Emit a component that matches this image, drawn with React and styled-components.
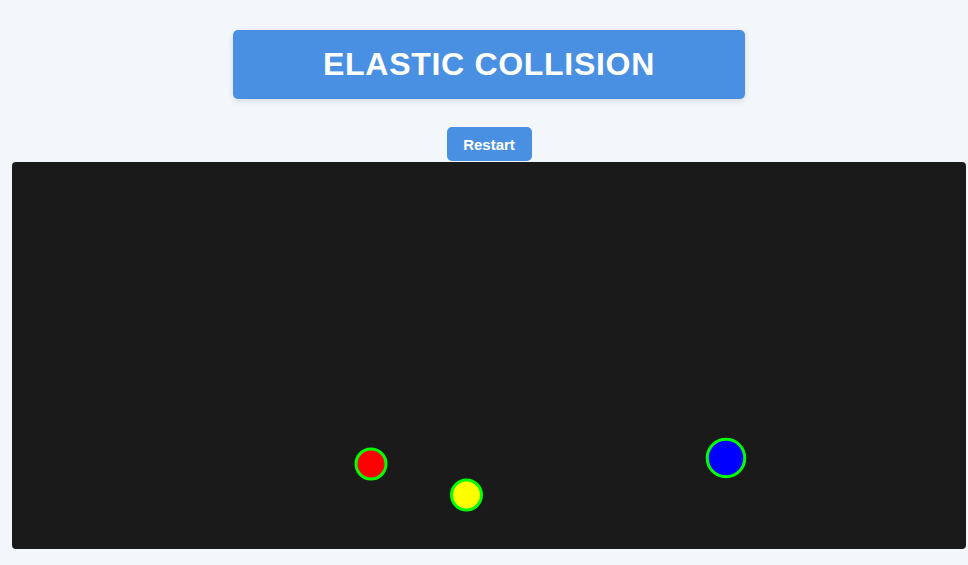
import React from "react";
import styled, { createGlobalStyle } from "styled-components";

const GlobalStyle = createGlobalStyle`
  html, body {
    margin: 0;
    padding: 0;
    background: #f3f6fa;
    font-family: "Liberation Sans", Arial, sans-serif;
  }
`;

const balls = [
  { id: "red", x: 359, y: 302, r: 15, fill: "#ff0000" },
  { id: "yellow", x: 454.5, y: 333, r: 15, fill: "#ffff00" },
  { id: "blue", x: 714, y: 296, r: 18.8, fill: "#0000ff" },
];

const App = () => {
  return (
    <>
      <GlobalStyle />
      <Page>
        <Title>ELASTIC COLLISION</Title>
        <RestartButton>Restart</RestartButton>
        <Stage>
          <svg width="954" height="387" viewBox="0 0 954 387">
            {balls.map((b) => (
              <circle
                key={b.id}
                cx={b.x}
                cy={b.y}
                r={b.r}
                fill={b.fill}
                stroke="#00ff00"
                strokeWidth="3"
              />
            ))}
          </svg>
        </Stage>
      </Page>
    </>
  );
};

const Page = styled.div`
  width: 954px;
  margin-left: 12px;
  padding-top: 30px;
  display: flex;
  flex-direction: column;
  align-items: center;
`;

const Title = styled.h1`
  margin: 0;
  box-sizing: border-box;
  width: 512px;
  height: 69px;
  display: flex;
  align-items: center;
  justify-content: center;
  background: #4a90e2;
  color: #ffffff;
  font-size: 32px;
  font-weight: 700;
  letter-spacing: 0.7px;
  border-radius: 5px;
  box-shadow: 0 2px 6px rgba(0, 0, 0, 0.12);
`;

const RestartButton = styled.button`
  margin-top: 28px;
  width: 85px;
  height: 34px;
  border: none;
  border-radius: 5px;
  background: #4a90e2;
  color: #ffffff;
  font-family: "Liberation Sans", Arial, sans-serif;
  font-size: 15px;
  font-weight: 700;
  cursor: pointer;
`;

const Stage = styled.div`
  margin-top: 1px;
  width: 954px;
  height: 387px;
  background: #1a1a1a;
  border-radius: 4px;
  overflow: hidden;

  svg {
    display: block;
  }
`;

export default App;
